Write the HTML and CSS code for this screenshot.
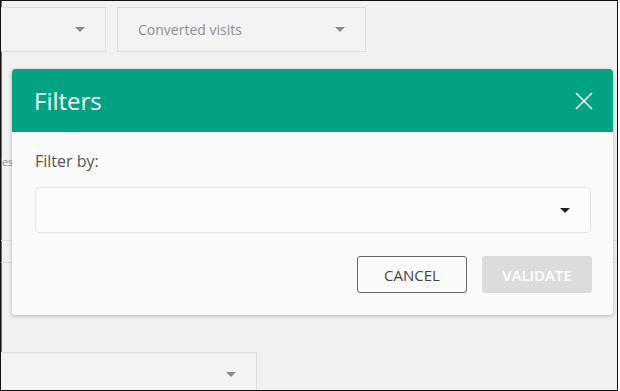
FILE: index.html
```html
<!DOCTYPE html>
<html lang="en">
<head>
    <meta charset="UTF-8">
    <title>Filters</title>
    <link rel="stylesheet" href="styles.css">
</head>
<body>
    <div class="frame">
        <div class="toolbar">
            <div class="select select-first">
                <span class="select-text"></span>
                <span class="caret"></span>
            </div>
            <div class="select select-second">
                <span class="select-text">Converted visits</span>
                <span class="caret"></span>
            </div>
        </div>

        <div class="behind">
            <p class="behind-label">Sales</p>
            <div class="behind-row"></div>
        </div>

        <div class="select select-bottom">
            <span class="select-text"></span>
            <span class="caret"></span>
        </div>

        <!-- modal lies over the page -->
        <div class="modal">
            <div class="modal-header">
                <h2>Filters</h2>
                <button class="close" aria-label="Close">
                    <svg width="18" height="18" viewBox="0 0 18 18">
                        <path d="M1 1 L17 17 M17 1 L1 17" stroke="#fff" stroke-width="1.6" fill="none"/>
                    </svg>
                </button>
            </div>
            <div class="modal-body">
                <label class="field-label">Filter by:</label>
                <div class="field-select">
                    <span class="caret caret-dark"></span>
                </div>
                <div class="actions">
                    <button class="btn btn-cancel">CANCEL</button>
                    <button class="btn btn-validate" disabled>VALIDATE</button>
                </div>
            </div>
        </div>
    </div>
</body>
</html>
```

FILE: styles.css
```css
body {
    margin: 0;
    background-color: #fff;
    font-family: 'Open Sans', sans-serif;
}

.frame {
    position: relative;
    width: 618px;
    height: 391px;
    box-sizing: border-box;
    border: 1px solid #111;
    box-shadow: inset 1px 0 0 #2a7fd4;
    background-color: #f2f1f1;
    overflow: hidden;
}

.toolbar {
    display: flex;
    gap: 11px;
    padding-top: 6px;
}

.select {
    display: flex;
    align-items: center;
    justify-content: space-between;
    box-sizing: border-box;
    height: 45px;
    border: 1px solid #dedcdc;
    background-color: #f4f3f3;
    padding: 0 20px;
}

.select-first {
    width: 125px;
    margin-left: -20px;
}

.select-second {
    width: 249px;
}

.select-text {
    color: #8f8f8f;
    font-size: 14px;
}

.caret {
    width: 0;
    height: 0;
    border-left: 5px solid transparent;
    border-right: 5px solid transparent;
    border-top: 5px solid #8a8a8a;
}

.caret-dark {
    border-top-color: #222;
}

.behind {
    margin-top: 102px;
}

.behind-label {
    margin: 0;
    font-size: 11px;
    color: #8f8f8f;
    margin-left: -14px;
}

.behind-row {
    margin-top: 71px;
    height: 21px;
    border-top: 1px solid #e2e0e0;
    border-bottom: 1px solid #e2e0e0;
}

.select-bottom {
    width: 276px;
    height: 50px;
    margin-left: -20px;
    margin-top: 89px;
    padding-bottom: 6px;
}

.modal {
    position: absolute;
    left: 11px;
    top: 68px;
    width: 601px;
    background-color: #fafafa;
    border-radius: 4px;
    box-shadow: 0 1px 4px rgba(0,0,0,0.25);
    overflow: hidden;
}

.modal-header {
    display: flex;
    align-items: center;
    justify-content: space-between;
    height: 63px;
    padding: 0 20px 0 22px;
    background-color: #02a283;
}

.modal-header h2 {
    margin: 0;
    color: #fff;
    font-size: 24px;
    font-weight: 400;
}

.close {
    background: none;
    border: none;
    padding: 0;
    display: flex;
}

.modal-body {
    padding: 18px 21px 22px 23px;
}

.field-label {
    display: block;
    font-size: 16px;
    line-height: 22px;
    color: #555;
}

.field-select {
    display: flex;
    align-items: center;
    justify-content: flex-end;
    box-sizing: border-box;
    width: 556px;
    height: 46px;
    margin-top: 15px;
    padding-right: 20px;
    border: 1px solid #e4e4e4;
    border-radius: 4px;
    background-color: #fcfcfc;
}

.actions {
    display: flex;
    justify-content: flex-end;
    gap: 15px;
    margin-top: 23px;
}

.btn {
    width: 110px;
    height: 37px;
    border-radius: 3px;
    font-family: 'Open Sans', sans-serif;
    font-size: 15px;
}

.btn-cancel {
    border: 1px solid #666;
    background-color: #fafafa;
    color: #444;
}

.btn-validate {
    border: none;
    background-color: #dcdcdc;
    color: #fff;
    font-weight: 600;
}
```
